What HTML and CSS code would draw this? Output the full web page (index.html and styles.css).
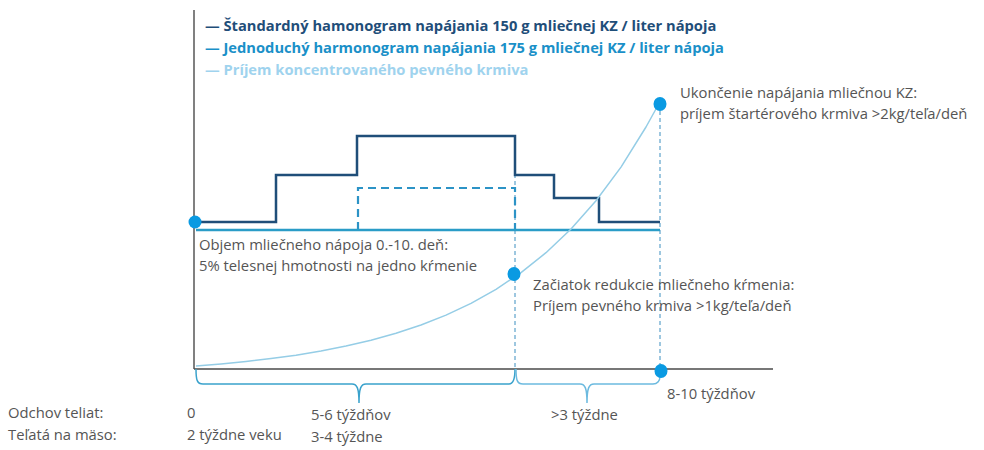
FILE: index.html
```html
<!DOCTYPE html>
<html lang="sk">
<head>
<meta charset="utf-8">
<title>Harmonogram napájania teliat</title>
<link rel="stylesheet" href="styles.css">
</head>
<body>
<div class="chart">
  <svg class="plot" width="984" height="450" viewBox="0 0 984 450" xmlns="http://www.w3.org/2000/svg">
    <!-- axes -->
    <line class="axis" x1="194" y1="10" x2="194" y2="369"/>
    <line class="axis" x1="194" y1="369" x2="773" y2="369"/>
    <!-- guide verticals -->
    <line class="guide" x1="515" y1="174" x2="515" y2="369"/>
    <line class="guide" x1="660" y1="104" x2="660" y2="372"/>
    <!-- simple schedule (dashed) -->
    <polyline class="simple" points="358,230 358,188 515,188 515,230"/>
    <!-- base line -->
    <line class="base" x1="196" y1="230" x2="660" y2="230"/>
    <!-- standard schedule -->
    <polyline class="standard" points="196,222 276,222 276,175 357,175 357,136 515,136 515,175 554,175 554,198 599,198 599,222 660,222"/>
    <!-- concentrate intake curve -->
    <polyline class="intake" points="196,366 221,364 246,361.5 271,358.6 296,355.2 321,351 346,346.1 371,340.3 396,333.3 421,325 446,315.1 471,303.4 496,289.3 521,272.6 546,252.7 571,229 596,200.8 621,167.1 646,127 659,103.5"/>
    <!-- braces -->
    <path class="brace brace-a" d="M196,369 C196,380 197,384 203,384 L352,384 C357,384 359,388 359,403 C359,388 361,384 366,384 L509,384 C513,384 515,380 515,369"/>
    <path class="brace brace-b" d="M516,369 C516,380 517,384 523,384 L580,384 C585,384 587,388 587,403 C587,388 589,384 594,384 L653,384 C657,384 660,381 660,376"/>
    <!-- markers -->
    <ellipse class="dot" cx="195" cy="222" rx="6.5" ry="6.5"/>
    <ellipse class="dot" cx="514" cy="274" rx="6.5" ry="7"/>
    <ellipse class="dot" cx="660" cy="104" rx="6.5" ry="7"/>
    <ellipse class="dot" cx="661" cy="371" rx="6.5" ry="7"/>
  </svg>

  <ul class="legend">
    <li class="legend-item legend-standard">— Štandardný hamonogram napájania 150 g mliečnej KZ / liter nápoja</li>
    <li class="legend-item legend-simple">— Jednoduchý harmonogram napájania 175 g mliečnej KZ / liter nápoja</li>
    <li class="legend-item legend-intake">— Príjem koncentrovaného pevného krmiva</li>
  </ul>

  <p class="note note-end">Ukončenie napájania mliečnou KZ:<br>príjem štartérového krmiva &gt;2kg/teľa/deň</p>
  <p class="note note-volume">Objem mliečneho nápoja 0.-10. deň:<br>5% telesnej hmotnosti na jedno kŕmenie</p>
  <p class="note note-reduce">Začiatok redukcie mliečneho kŕmenia:<br>Príjem pevného krmiva &gt;1kg/teľa/deň</p>
  <p class="note note-weeks">8-10 týždňov</p>

  <div class="timeline">
    <span class="cell">Odchov teliat:</span>
    <span class="cell">0</span>
    <span class="cell cell-low">5-6 týždňov</span>
    <span class="cell cell-low">&gt;3 týždne</span>
    <span class="cell">Teľatá na mäso:</span>
    <span class="cell">2 týždne veku</span>
    <span class="cell cell-low">3-4 týždne</span>
    <span class="cell"></span>
  </div>
</div>
</body>
</html>
```

FILE: styles.css
```css
* { box-sizing: border-box; }

html, body {
  margin: 0;
  padding: 0;
  background: #ffffff;
}

body {
  font-family: "Open Sans", "Noto Sans", "Liberation Sans", sans-serif;
  font-size: 14.8px;
  color: #555555;
}

.chart {
  position: relative;
  width: 984px;
  height: 450px;
  display: flex;
  flex-direction: column;
  overflow: hidden;
}

.plot {
  position: absolute;
  left: 0;
  top: 0;
}

.axis {
  stroke: #4a4a4a;
  stroke-width: 1.4;
}

.guide {
  stroke: #3d8fc0;
  stroke-width: 1;
  stroke-dasharray: 4 3;
}

.simple {
  fill: none;
  stroke: #2c93c6;
  stroke-width: 2.2;
  stroke-dasharray: 8 5;
}

.base {
  stroke: #2a9cc7;
  stroke-width: 2.6;
}

.standard {
  fill: none;
  stroke: #1f4e79;
  stroke-width: 2.5;
  stroke-linejoin: miter;
}

.intake {
  fill: none;
  stroke: #95cde6;
  stroke-width: 1.5;
  stroke-linejoin: round;
}

.brace {
  fill: none;
  stroke-width: 1.5;
}

.brace-a { stroke: #3aa2cc; }
.brace-b { stroke: #6cbadf; }

.dot { fill: #0a9ae2; }

.legend {
  position: relative;
  list-style: none;
  margin: 14px 0 0 205px;
  padding: 0;
  font-weight: 700;
  font-size: 14.7px;
  line-height: 22px;
  white-space: nowrap;
}

.legend-standard { color: #1f4e79; }
.legend-simple { color: #1a90c8; }
.legend-intake { color: #9fd3ee; }

.note {
  position: absolute;
  margin: 0;
  line-height: 21px;
  white-space: nowrap;
}

.note-end { left: 680px; top: 82px; }
.note-volume { left: 199px; top: 234px; }
.note-reduce { left: 533px; top: 274px; }
.note-weeks { left: 667px; top: 383px; }

.timeline {
  position: relative;
  margin-top: auto;
  padding: 0 0 5px 8px;
  display: grid;
  grid-template-columns: 179px 124px 240px 1fr;
  grid-auto-rows: 22px;
  line-height: 22px;
  white-space: nowrap;
}

.cell-low { padding-top: 2px; }
```
